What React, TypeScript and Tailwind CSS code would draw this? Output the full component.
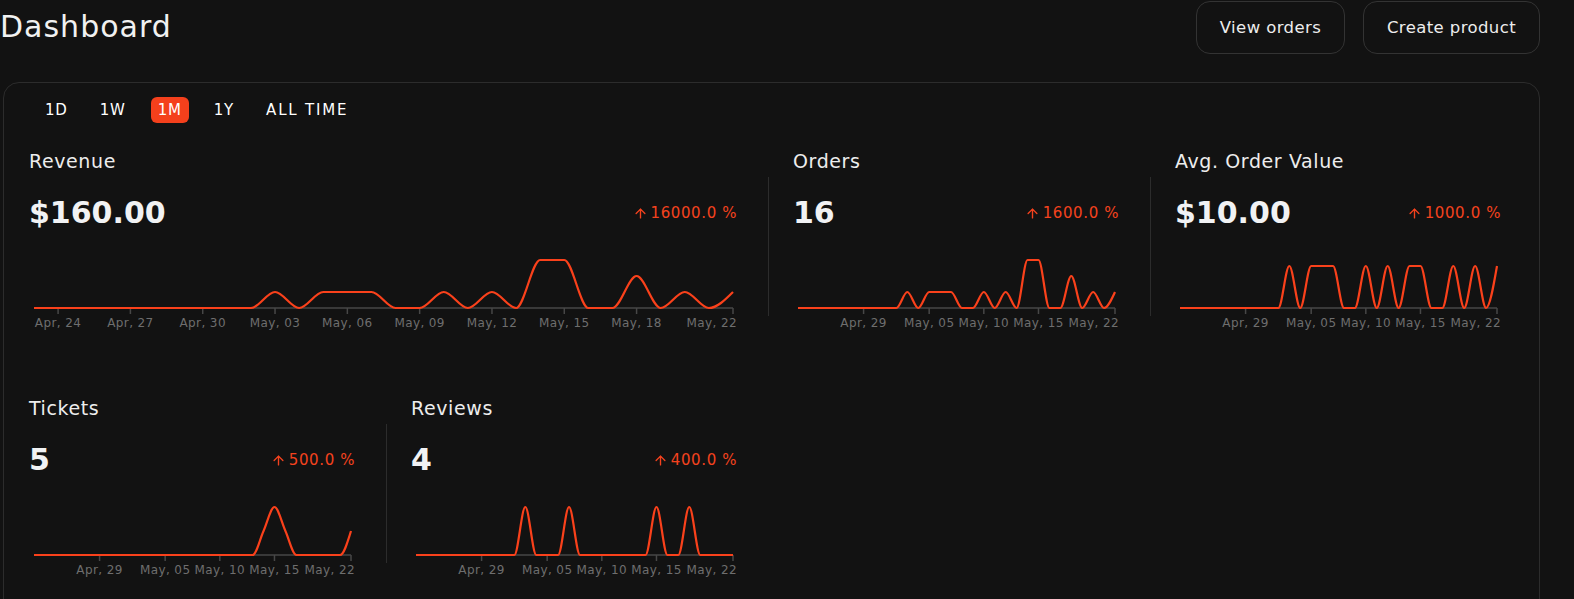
import React from "react";
import { ArrowUp } from "lucide-react";

type Tick = { day: number; label: string };

function monotonePath(pts: [number, number][]): string {
  const n = pts.length;
  if (n < 2) return "";
  const t: number[] = new Array(n).fill(0);
  const sign = (v: number) => (v < 0 ? -1 : v > 0 ? 1 : 0);
  for (let i = 1; i < n - 1; i++) {
    const [x0, y0] = pts[i - 1];
    const [x1, y1] = pts[i];
    const [x2, y2] = pts[i + 1];
    const h0 = x1 - x0;
    const h1 = x2 - x1;
    const s0 = (y1 - y0) / h0;
    const s1 = (y2 - y1) / h1;
    const p = (s0 * h1 + s1 * h0) / (h0 + h1);
    t[i] = (sign(s0) + sign(s1)) * Math.min(Math.abs(s0), Math.abs(s1), 0.5 * Math.abs(p)) || 0;
  }
  {
    const h = pts[1][0] - pts[0][0];
    t[0] = (3 * (pts[1][1] - pts[0][1]) / h - t[1]) / 2;
    const hl = pts[n - 1][0] - pts[n - 2][0];
    t[n - 1] = (3 * (pts[n - 1][1] - pts[n - 2][1]) / hl - t[n - 2]) / 2;
  }
  let d = `M${pts[0][0]},${pts[0][1]}`;
  for (let i = 0; i < n - 1; i++) {
    const [x0, y0] = pts[i];
    const [x1, y1] = pts[i + 1];
    const dx = (x1 - x0) / 3;
    d += `C${x0 + dx},${y0 + dx * t[i]},${x1 - dx},${y1 - dx * t[i + 1]},${x1},${y1}`;
  }
  return d;
}

function Chart({
  data,
  width,
  ticks,
  peak = 48,
}: {
  data: number[];
  width: number;
  ticks: Tick[];
  peak?: number;
}) {
  const base = 77;
  const x0 = 5;
  const x1 = width - 4;
  const step = (x1 - x0) / (data.length - 1);
  const max = Math.max(...data);
  const pts: [number, number][] = data.map((v, i) => [x0 + i * step, base - (v / max) * peak]);
  return (
    <svg width={width} height={101} className="block overflow-visible">
      <line x1={x0} y1={base} x2={x1} y2={base} stroke="#474747" strokeWidth={1.5} />
      {ticks.map((t, i) => {
        const tx = x0 + t.day * step;
        const last = i === ticks.length - 1;
        return (
          <g key={t.label}>
            <line x1={tx} y1={base} x2={tx} y2={base + 6} stroke="#474747" strokeWidth={1.5} />
            <text
              x={last ? width : tx}
              y={96}
              textAnchor={last ? "end" : "middle"}
              fill="#6e6e6e"
              fontSize={12}
              letterSpacing={0.4}
              fontFamily="DejaVu Sans, sans-serif"
            >
              {t.label}
            </text>
          </g>
        );
      })}
      <path d={monotonePath(pts)} fill="none" stroke="#fa411b" strokeWidth={2.2} strokeLinejoin="round" />
    </svg>
  );
}

function Metric({
  title,
  value,
  pct,
  data,
  width,
  ticks,
  divider,
  span,
  peak,
}: {
  title: string;
  value: string;
  pct: string;
  data: number[];
  width: number;
  ticks: Tick[];
  divider: boolean;
  span?: boolean;
  peak?: number;
}) {
  return (
    <div className={span ? "col-span-2 flex flex-col" : "flex flex-col"}>
      <div className="h-[24px] pl-[25px] text-[19px] leading-[24px] tracking-[0.6px] text-[#ededed]">{title}</div>
      <div className="flex">
        <div className={divider ? "w-px mt-[4px] mb-[16px] bg-[#2c2c2c]" : "w-px mt-[4px] mb-[16px]"} />
        <div className="flex-1 pl-[24px] pr-[31px] pt-[22px]">
          <div className="flex h-[36px] items-center justify-between">
            <span className="text-[30px] font-bold leading-[36px] text-[#f1f2f4]">{value}</span>
            <span className="flex items-center gap-[3px] text-[15px] leading-[20px] tracking-[0.6px] text-[#f4421e]">
              <ArrowUp size={15} strokeWidth={2.2} />
              {pct}
            </span>
          </div>
          <Chart data={data} width={width} ticks={ticks} peak={peak} />
        </div>
      </div>
    </div>
  );
}

const orders = [0, 0, 0, 0, 0, 0, 0, 0, 0, 0, 1, 0, 1, 1, 1, 0, 0, 1, 0, 1, 0, 3, 3, 0, 0, 2, 0, 1, 0, 1];
const aov = orders.map((v) => (v ? 1 : 0));
const tickets = Array.from({ length: 30 }, (_, i) => (i === 21 ? 1 : i === 22 ? 2 : i === 23 ? 1 : i === 29 ? 1 : 0));
const reviews = Array.from({ length: 30 }, (_, i) => ([10, 14, 22, 25].includes(i) ? 1 : 0));

const wideTicks: Tick[] = [
  { day: 1, label: "Apr, 24" },
  { day: 4, label: "Apr, 27" },
  { day: 7, label: "Apr, 30" },
  { day: 10, label: "May, 03" },
  { day: 13, label: "May, 06" },
  { day: 16, label: "May, 09" },
  { day: 19, label: "May, 12" },
  { day: 22, label: "May, 15" },
  { day: 25, label: "May, 18" },
  { day: 29, label: "May, 22" },
];

const narrowTicks: Tick[] = [
  { day: 6, label: "Apr, 29" },
  { day: 12, label: "May, 05" },
  { day: 17, label: "May, 10" },
  { day: 22, label: "May, 15" },
  { day: 29, label: "May, 22" },
];

export default function App() {
  const tabs = ["1D", "1W", "1M", "1Y", "ALL TIME"];
  return (
    <div className="min-h-screen w-full bg-[#121212] text-[#ededed] font-['DejaVu_Sans',sans-serif]">
      <div className="w-[1540px]">
        <div className="flex h-[54px] items-center justify-between">
          <h1 className="text-[30px] leading-[36px] tracking-[1px] text-[#f1f1f1]">Dashboard</h1>
          <div className="flex gap-[18px] self-end">
            <button className="h-[53px] w-[149px] rounded-[14px] border border-[#333333] pt-[2px] text-[16.5px] tracking-[0.4px] text-[#ededed]">
              View orders
            </button>
            <button className="h-[53px] w-[177px] rounded-[14px] border border-[#333333] pt-[2px] text-[16.5px] tracking-[0.4px] text-[#ededed]">
              Create product
            </button>
          </div>
        </div>
        <div className="ml-[3px] mt-[28px] w-[1537px] rounded-[16px] border border-[#2c2c2c] pb-[40px]">
          <div className="flex items-center gap-[18px] pl-[34px] pt-[14px]">
            {tabs.map((t) => (
              <div
                key={t}
                className={
                  t === "1M"
                    ? "flex h-[26px] items-center rounded-[6px] bg-[#f4401c] px-[7px] text-[15px] tracking-[0.8px] text-white"
                    : t === "ALL TIME"
                    ? "flex h-[26px] items-center rounded-[6px] px-[7px] text-[15px] tracking-[1.8px] text-white"
                    : "flex h-[26px] items-center rounded-[6px] px-[7px] text-[15px] tracking-[0.8px] text-white"
                }
              >
                {t}
              </div>
            ))}
          </div>
          <div className="mt-[26px] grid grid-cols-[repeat(4,382px)] gap-y-[64px]">
            <Metric title="Revenue" value="$160.00" pct="16000.0 %" data={orders} width={708} ticks={wideTicks} divider={false} span />
            <Metric title="Orders" value="16" pct="1600.0 %" data={orders} width={326} ticks={narrowTicks} divider />
            <Metric title="Avg. Order Value" value="$10.00" pct="1000.0 %" data={aov} width={326} ticks={narrowTicks} divider peak={42} />
            <Metric title="Tickets" value="5" pct="500.0 %" data={tickets} width={326} ticks={narrowTicks} divider={false} />
            <Metric title="Reviews" value="4" pct="400.0 %" data={reviews} width={326} ticks={narrowTicks} divider />
          </div>
        </div>
      </div>
    </div>
  );
}
